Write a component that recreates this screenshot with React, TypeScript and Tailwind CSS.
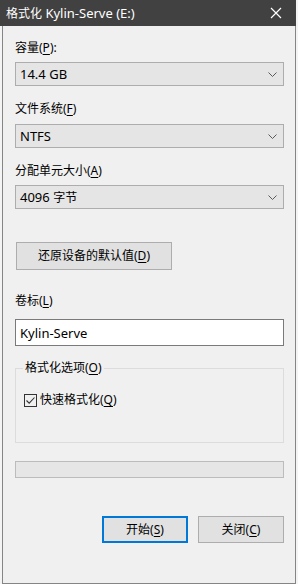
import React from "react";

const font = { fontFamily: '"Noto Sans", "Noto Sans CJK SC", sans-serif' };

function U({ children }: { children: React.ReactNode }) {
  return <span className="underline underline-offset-2 decoration-[1px]">{children}</span>;
}

function L({ children }: { children: React.ReactNode }) {
  return <span className="text-[13px]">{children}</span>;
}

function Chevron() {
  return (
    <svg width="9" height="5" viewBox="0 0 9 5" className="shrink-0">
      <path d="M0.5 0.5 L4.5 4.5 L8.5 0.5" fill="none" stroke="#5a5a5a" strokeWidth="1" />
    </svg>
  );
}

function Combo({ children, className = "" }: { children: React.ReactNode; className?: string }) {
  return (
    <div
      className={`h-[24px] bg-[#e5e5e5] border border-[#adadad] flex items-center justify-between pl-[4px] pr-[6px] text-[12px] text-black ${className}`}
    >
      <span>{children}</span>
      <Chevron />
    </div>
  );
}

export default function App() {
  return (
    <div className="w-[298px] h-[586px] bg-[#f4f4f4] overflow-hidden text-[12px] leading-[16px] text-black" style={font}>
      <div className="w-[296px] flex flex-col">
        <div className="h-[26px] bg-[#414141] flex items-center justify-between pl-[6px] pr-[14px] text-white text-[12px]">
          <span>
            格式化<L> Kylin-Serve (E:)</L>
          </span>
          <svg width="12" height="12" viewBox="0 0 12 12">
            <path d="M1 1 L11 11 M11 1 L1 11" stroke="#ffffff" strokeWidth="1.2" />
          </svg>
        </div>
        <div className="ml-[2px] h-[558px] bg-[#f0f0f0] border-x border-b border-[#858585] pl-[12px] pr-[11px] pt-[14px] flex flex-col">
          <div>
            容量(<U>P</U>):
          </div>
          <Combo className="mt-[6px]">
            <L>14.4 GB</L>
          </Combo>
          <div className="mt-[15px]">
            文件系统(<U>F</U>)
          </div>
          <Combo className="mt-[7px]">
            <L>NTFS</L>
          </Combo>
          <div className="mt-[15px]">
            分配单元大小(<U>A</U>)
          </div>
          <Combo className="mt-[6px]">
            <L>4096 </L>字节
          </Combo>
          <div className="mt-[33px] ml-[1px] w-[156px] h-[28px] bg-[#e1e1e1] border border-[#adadad] flex items-center justify-center">
            <span>
              还原设备的默认值(<U>D</U>)
            </span>
          </div>
          <div className="mt-[23px]">
            卷标(<U>L</U>)
          </div>
          <div className="mt-[10px] h-[27px] bg-white border border-[#7a7a7a] flex items-center pl-[4px]">
            <L>Kylin-Serve</L>
          </div>
          <div className="mt-[22px] h-[75px] border border-[#dcdcdc] relative pl-[8px]">
            <div className="absolute -top-[9px] left-[7px] bg-[#f0f0f0] px-[2px]">
              格式化选项(<U>O</U>)
            </div>
            <div className="mt-[23px] flex items-center gap-[3px]">
              <div className="w-[13px] h-[13px] border border-[#333333] bg-[#f0f0f0] flex items-center justify-center">
                <svg width="11" height="11" viewBox="0 0 11 11">
                  <path d="M1.5 5.5 L4.2 8.2 L9.5 2.5" fill="none" stroke="#333333" strokeWidth="1.1" />
                </svg>
              </div>
              <span>
                快速格式化(<U>Q</U>)
              </span>
            </div>
          </div>
          <div className="mt-[18px] h-[17px] bg-[#e6e6e6] border border-[#bcbcbc]" />
          <div className="mt-[38px] flex justify-end gap-[10px]">
            <div className="w-[86px] h-[27px] bg-[#e1e1e1] border-2 border-[#0078d7] flex items-center justify-center">
              <span>
                开始(<U>S</U>)
              </span>
            </div>
            <div className="w-[86px] h-[27px] bg-[#e1e1e1] border border-[#adadad] flex items-center justify-center">
              <span>
                关闭(<U>C</U>)
              </span>
            </div>
          </div>
        </div>
      </div>
      <div className="h-[3px] bg-white" />
    </div>
  );
}
